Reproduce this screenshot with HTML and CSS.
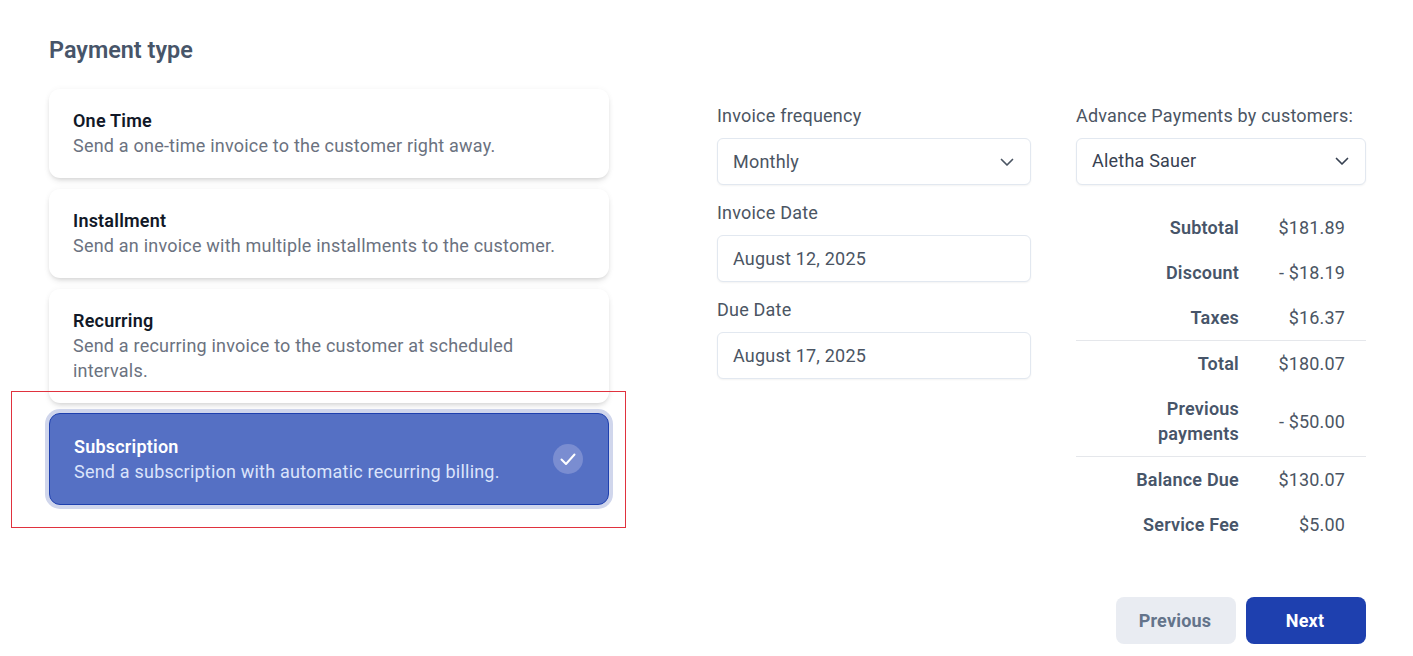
FILE: index.html
```html
<!DOCTYPE html>
<html lang="en">
<head>
    <meta charset="UTF-8">
    <title>Payment type</title>
    <link rel="stylesheet" href="styles.css">
</head>
<body>

<div class="page">
    <section class="types">
        <h2>Payment type</h2>

        <div class="type-card">
            <div class="type-text">
                <div class="type-name">One Time</div>
                <div class="type-desc">Send a one-time invoice to the customer right away.</div>
            </div>
        </div>
        <div class="type-card">
            <div class="type-text">
                <div class="type-name">Installment</div>
                <div class="type-desc">Send an invoice with multiple installments to the customer.</div>
            </div>
        </div>
        <div class="type-card">
            <div class="type-text">
                <div class="type-name">Recurring</div>
                <div class="type-desc">Send a recurring invoice to the customer at scheduled intervals.</div>
            </div>
        </div>
        <div class="type-card selected">
            <div class="type-text">
                <div class="type-name">Subscription</div>
                <div class="type-desc">Send a subscription with automatic recurring billing.</div>
            </div>
            <span class="check">
                <svg width="18" height="18" viewBox="0 0 18 18" fill="none" stroke="#fff" stroke-width="2" stroke-linecap="round" stroke-linejoin="round"><path d="M2.5 9.5 7 14 15.5 4.5"/></svg>
            </span>
        </div>
        <!-- marca vermelha em volta do cartao selecionado -->
        <div class="highlight"></div>
    </section>

    <section class="dates">
        <label>Invoice frequency</label>
        <div class="field">
            <span>Monthly</span>
            <svg class="chevron" width="16" height="16" viewBox="0 0 16 16" fill="none" stroke="#4b5563" stroke-width="1.7" stroke-linecap="round" stroke-linejoin="round"><path d="M2.5 5.5 8 11l5.5-5.5"/></svg>
        </div>
        <label>Invoice Date</label>
        <div class="field"><span>August 12, 2025</span></div>
        <label>Due Date</label>
        <div class="field"><span>August 17, 2025</span></div>
    </section>

    <section class="summary">
        <label>Advance Payments by customers:</label>
        <div class="field dark">
            <span>Aletha Sauer</span>
            <svg class="chevron" width="16" height="16" viewBox="0 0 16 16" fill="none" stroke="#374151" stroke-width="1.7" stroke-linecap="round" stroke-linejoin="round"><path d="M2.5 5.5 8 11l5.5-5.5"/></svg>
        </div>

        <table>
            <tr><th>Subtotal</th><td>$181.89</td></tr>
            <tr><th>Discount</th><td>- $18.19</td></tr>
            <tr class="line"><th>Taxes</th><td>$16.37</td></tr>
            <tr><th>Total</th><td>$180.07</td></tr>
            <tr class="line"><th>Previous payments</th><td>- $50.00</td></tr>
            <tr><th>Balance Due</th><td>$130.07</td></tr>
            <tr><th>Service Fee</th><td>$5.00</td></tr>
        </table>

        <div class="buttons">
            <button class="btn-prev">Previous</button>
            <button class="btn-next">Next</button>
        </div>
    </section>
</div>

</body>
</html>
```

FILE: styles.css
```css
* {
    margin: 0;
    padding: 0;
    box-sizing: border-box;
}

body {
    font-family: 'Roboto', sans-serif;
    background-color: #fff;
    color: #4b5563;
    letter-spacing: 0.21px;
}

.page {
    display: flex;
    padding: 0 47px 0 49px;
}

/* Coluna dos tipos de pagamento */
.types {
    position: relative;
    width: 560px;
    margin-right: 108px;
    padding-top: 36px;
}

h2 {
    font-size: 23.4px;
    line-height: 28px;
    font-weight: 600;
    color: #475569;
    letter-spacing: 0;
    margin-bottom: 25px;
}

.type-card {
    display: flex;
    align-items: center;
    justify-content: space-between;
    padding: 19px 24px 20px;
    margin-bottom: 11px;
    border-radius: 11px;
    background-color: #fff;
    box-shadow: 0 4px 6px -1px rgba(0, 0, 0, 0.1), 0 2px 4px -2px rgba(0, 0, 0, 0.1), 0 0 6px rgba(0, 0, 0, 0.04);
}

.type-card:nth-of-type(3) {
    margin-bottom: 10px;
}

.type-name {
    font-size: 18px;
    line-height: 25px;
    font-weight: 600;
    color: #111827;
}

.type-desc {
    font-size: 18px;
    line-height: 25px;
    color: #6b7280;
}

.selected {
    padding: 20px 25px 20px 24px;
    background-color: #5570c4;
    border: 1px solid #1e40af;
    box-shadow: 0 0 0 4px #d0d6ec;
}

.selected .type-name {
    color: #fff;
}

.selected .type-desc {
    color: #dbe4fb;
}

.check {
    display: flex;
    align-items: center;
    justify-content: center;
    width: 30px;
    height: 30px;
    border-radius: 50%;
    background-color: #7a8dd1;
}

.highlight {
    position: absolute;
    left: -38px;
    top: 391px;
    width: 615px;
    height: 137px;
    border: 1px solid #e0323e;
}

/* Coluna das datas */
.dates {
    width: 314px;
    margin-right: 45px;
    padding-top: 103px;
}

label {
    display: block;
    font-size: 18px;
    line-height: 26px;
    color: #4b5563;
    margin-bottom: 9px;
}

.field {
    display: flex;
    align-items: center;
    justify-content: space-between;
    height: 47px;
    padding: 0 15px;
    margin-bottom: 15px;
    border: 1px solid #e2e8f0;
    border-radius: 6px;
    background-color: #fff;
    font-size: 18px;
    color: #4b5563;
    box-shadow: 0 1px 2px rgba(0, 0, 0, 0.05);
}

.dark {
    color: #374151;
    margin-bottom: 20px;
    padding-bottom: 2px;
}

/* Coluna do resumo */
.summary {
    width: 290px;
    padding-top: 103px;
}

table {
    width: 100%;
    border-collapse: collapse;
    font-size: 18px;
}

th {
    width: 163px;
    padding: 10px 0 10px 40px;
    text-align: right;
    font-weight: 600;
    line-height: 25px;
    color: #475569;
}

td {
    padding: 10px 21px 10px 0;
    text-align: right;
    line-height: 25px;
    color: #4b5563;
    letter-spacing: 0.15px;
}

tr.line th, tr.line td {
    border-bottom: 1px solid #e5e7eb;
}

.buttons {
    display: flex;
    justify-content: flex-end;
    gap: 10px;
    margin-top: 50px;
}

button {
    width: 120px;
    height: 47px;
    padding-right: 2px;
    border: none;
    border-radius: 8px;
    font-family: 'Roboto', sans-serif;
    font-size: 18px;
    font-weight: 700;
    letter-spacing: 0.2px;
    cursor: pointer;
}

.btn-prev {
    background-color: #e9ecf2;
    color: #64748b;
}

.btn-next {
    background-color: #1e40af;
    color: #fff;
}
```
